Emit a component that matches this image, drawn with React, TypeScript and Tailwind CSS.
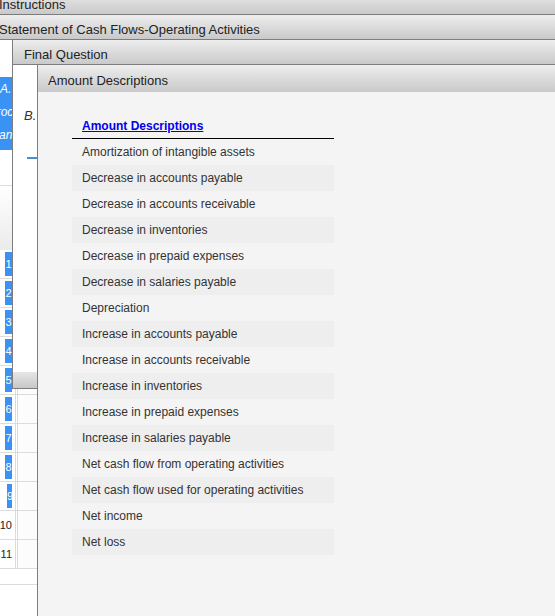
const descriptions = [
  "Amortization of intangible assets",
  "Decrease in accounts payable",
  "Decrease in accounts receivable",
  "Decrease in inventories",
  "Decrease in prepaid expenses",
  "Decrease in salaries payable",
  "Depreciation",
  "Increase in accounts payable",
  "Increase in accounts receivable",
  "Increase in inventories",
  "Increase in prepaid expenses",
  "Increase in salaries payable",
  "Net cash flow from operating activities",
  "Net cash flow used for operating activities",
  "Net income",
  "Net loss",
];

const rows = [1, 2, 3, 4, 5, 6, 7, 8, 9, 10, 11];

const header =
  "h-[25px] border-b border-[#7d7d7d] bg-linear-to-b from-[#eeeeee] to-[#c9c9c9] pt-[7px] text-[13px] leading-[15px] whitespace-nowrap";

function RowNumber({ n }: { n: number }) {
  if (n > 9) return <span className="text-[11px] leading-[24px] text-[#222]">{n}</span>;
  return (
    <span
      className={
        "inline-block h-[24px] overflow-hidden bg-[#3a92f4] text-center text-[11px] leading-[24px] text-white " +
        (n === 9 ? "w-[5px]" : "w-[7px]")
      }
    >
      {n}
    </span>
  );
}

export default function App() {
  return (
    <div className="relative h-[616px] w-[555px] overflow-hidden bg-white font-['Liberation_Sans',Arial,sans-serif] text-[#222]">
      {/* outer panels */}
      <div className={header + " -mt-[10px] -ml-[1px]"}>Instructions</div>
      <div className={header + " -ml-[1px]"}>Statement of Cash Flows-Operating Activities</div>

      <div className="pt-[37px]">
        <div className="h-[73px] w-[240px] overflow-hidden bg-[#3a92f4] pt-[1px] text-[12px] leading-[23px] italic text-white">
          <div>A. Prepare</div>
          <div className="-ml-[10px]">procedures</div>
          <div className="-ml-[1px]">analysis</div>
        </div>

        <div className="mt-[35px] h-[65px] border-t border-[#dcdcdc] bg-linear-to-b from-white to-[#ebebeb]" />
        {rows.map((n) => (
          <div key={n} className="flex h-[29px] border-b border-[#dcdcdc]">
            <div className="flex w-[16px] items-center justify-end border-r border-[#dcdcdc] pr-[3px]">
              <RowNumber n={n} />
            </div>
            <div className="ml-[1px] flex-1 border-l border-[#dcdcdc] bg-[#fcfcfc]" />
          </div>
        ))}
        <div className="mt-[15px] border-t border-[#dcdcdc]" />
      </div>

      {/* Final Question window */}
      <div className="absolute top-[40px] right-0 left-[12px] flex h-[349px] flex-col border-b border-l border-[#7d7d7d] bg-white">
        <div className={header + " pl-[11px]"}>Final Question</div>
        <div className="flex-1">
          <div className="mt-[43px] pl-[11px] text-[13px] leading-[15px] italic text-[#333]">
            <span>B.</span>
          </div>
          <div className="mt-[34px] ml-[14px] h-[2px] w-[200px] bg-[#4d8fcc]" />
        </div>
        <div className="h-[16px] bg-linear-to-b from-[#e6e6e6] to-[#c8c8c8]" />
      </div>

      {/* Amount Descriptions window */}
      <div className="absolute top-[65px] right-0 bottom-0 left-[37px] flex flex-col border-l border-[#7d7d7d] bg-[#f3f4f3]">
        <div className="h-[27px] bg-linear-to-b from-[#eeeeee] to-[#c9c9c9] pt-[8px] pl-[10px] text-[13px] leading-[15px]">
          Amount Descriptions
        </div>
        <div className="pt-[22px] pl-[34px]">
          <div className="w-[262px]">
            <div className="h-[25px] border-b border-black pl-[10px] text-[12px] leading-[24px] font-bold text-[#0000ee] underline">
              Amount Descriptions
            </div>
            {descriptions.map((d, i) => (
              <div
                key={d}
                className={
                  "h-[26px] pl-[10px] text-[12px] leading-[26px] text-[#333] " +
                  (i % 2 === 1 ? "bg-[#eeeeee]" : "")
                }
              >
                {d}
              </div>
            ))}
          </div>
        </div>
      </div>
    </div>
  );
}
